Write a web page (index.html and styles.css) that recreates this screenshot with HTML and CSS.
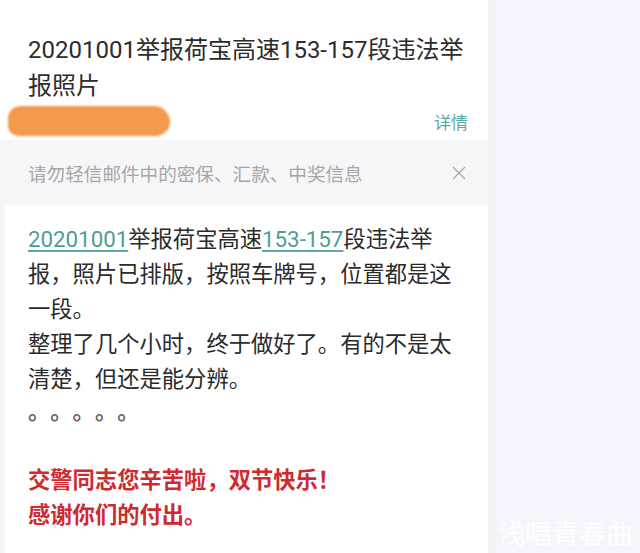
FILE: index.html
```html
<!DOCTYPE html>
<html lang="zh-CN">
<head>
<meta charset="utf-8">
<title>邮件</title>
<link rel="stylesheet" href="styles.css">
</head>
<body>
<div class="page">
  <div class="mail">
    <div class="head">
      <h1 class="subject">20201001举报荷宝高速153-157段违法举<br>报照片</h1>
      <div class="meta">
        <div class="redact"></div>
        <span class="detail">详情</span>
      </div>
    </div>
    <div class="notice">
      <span class="notice-text">请勿轻信邮件中的密保、汇款、中奖信息</span>
      <svg class="close" width="16" height="16" viewBox="0 0 16 16" aria-hidden="true">
        <path d="M2 2 L14 14 M14 2 L2 14" stroke="#a9a9ad" stroke-width="1.3" fill="none"/>
      </svg>
    </div>
    <div class="content">
      <p class="para"><span class="link">20201001</span>举报荷宝高速<span class="link">153-157</span>段违法举<br>报，照片已排版，按照车牌号，位置都是这<br>一段。</p>
      <p class="para">整理了几个小时，终于做好了。有的不是太<br>清楚，但还是能分辨。</p>
      <p class="para dots">。。。。。</p>
      <p class="para thanks">交警同志您辛苦啦，双节快乐！<br>感谢你们的付出。</p>
    </div>
  </div>
  <div class="side">
    <span class="watermark">浅唱青春曲</span>
  </div>
</div>
</body>
</html>
```

FILE: styles.css
```css
html, body {
  margin: 0;
  padding: 0;
  height: 100%;
}
body {
  background: #f5f6fd;
  font-family: Roboto, "Noto Sans CJK SC", sans-serif;
  color: #2e2e2e;
  overflow: hidden;
}
.page {
  display: flex;
  height: 553px;
}
.mail {
  width: 488px;
  display: flex;
  flex-direction: column;
  background: #ffffff;
}
.head {
  padding: 32px 20px 2px 28px;
  background: #ffffff;
}
.subject {
  margin: 0;
  font-size: 24px;
  line-height: 36px;
  font-weight: 400;
  color: #2c2c2c;
}
.meta {
  height: 34px;
  display: flex;
  align-items: center;
  justify-content: space-between;
}
.redact {
  width: 162px;
  height: 30px;
  margin-left: -20px;
  background: #f39a4f;
  border-radius: 14px 18px 16px 12px;
  filter: blur(1px);
}
.detail {
  font-size: 17px;
  color: #5ea8a2;
}
.notice {
  height: 65px;
  background: #f6f6f8;
  padding: 0 21px 0 28px;
  display: flex;
  align-items: center;
  justify-content: space-between;
}
.notice-text {
  font-size: 18.6px;
  color: #a6a6aa;
}
.close {
  display: block;
}
.content {
  flex: 1;
  background: #ffffff;
  border-left: 5px solid #f6f6f7;
  padding: 17px 20px 0 23px;
}
.para {
  margin: 0;
  font-size: 22.3px;
  line-height: 35px;
  color: #2b2b2b;
  white-space: nowrap;
}
.link {
  color: #4e9c98;
  text-decoration: underline;
  text-decoration-color: #5fa9a4;
  text-underline-offset: 3px;
}
.dots {
  font-family: "Noto Sans CJK SC", sans-serif;
  text-spacing-trim: space-all;
  font-weight: 700;
  color: #666;
  margin-top: -5px;
}
.thanks {
  margin-top: 36px;
  color: #cf2a30;
  font-weight: 700;
}
.side {
  flex: 1;
  background: #f5f6fd;
  border-left: 7px solid #f2f2f4;
  display: flex;
  flex-direction: column;
  justify-content: flex-end;
  align-items: flex-end;
  padding: 0 7px 3px 0;
}
.watermark {
  font-family: "Noto Sans CJK SC", sans-serif;
  font-size: 27px;
  line-height: 34px;
  color: rgba(255, 255, 255, 0.92);
}
```
